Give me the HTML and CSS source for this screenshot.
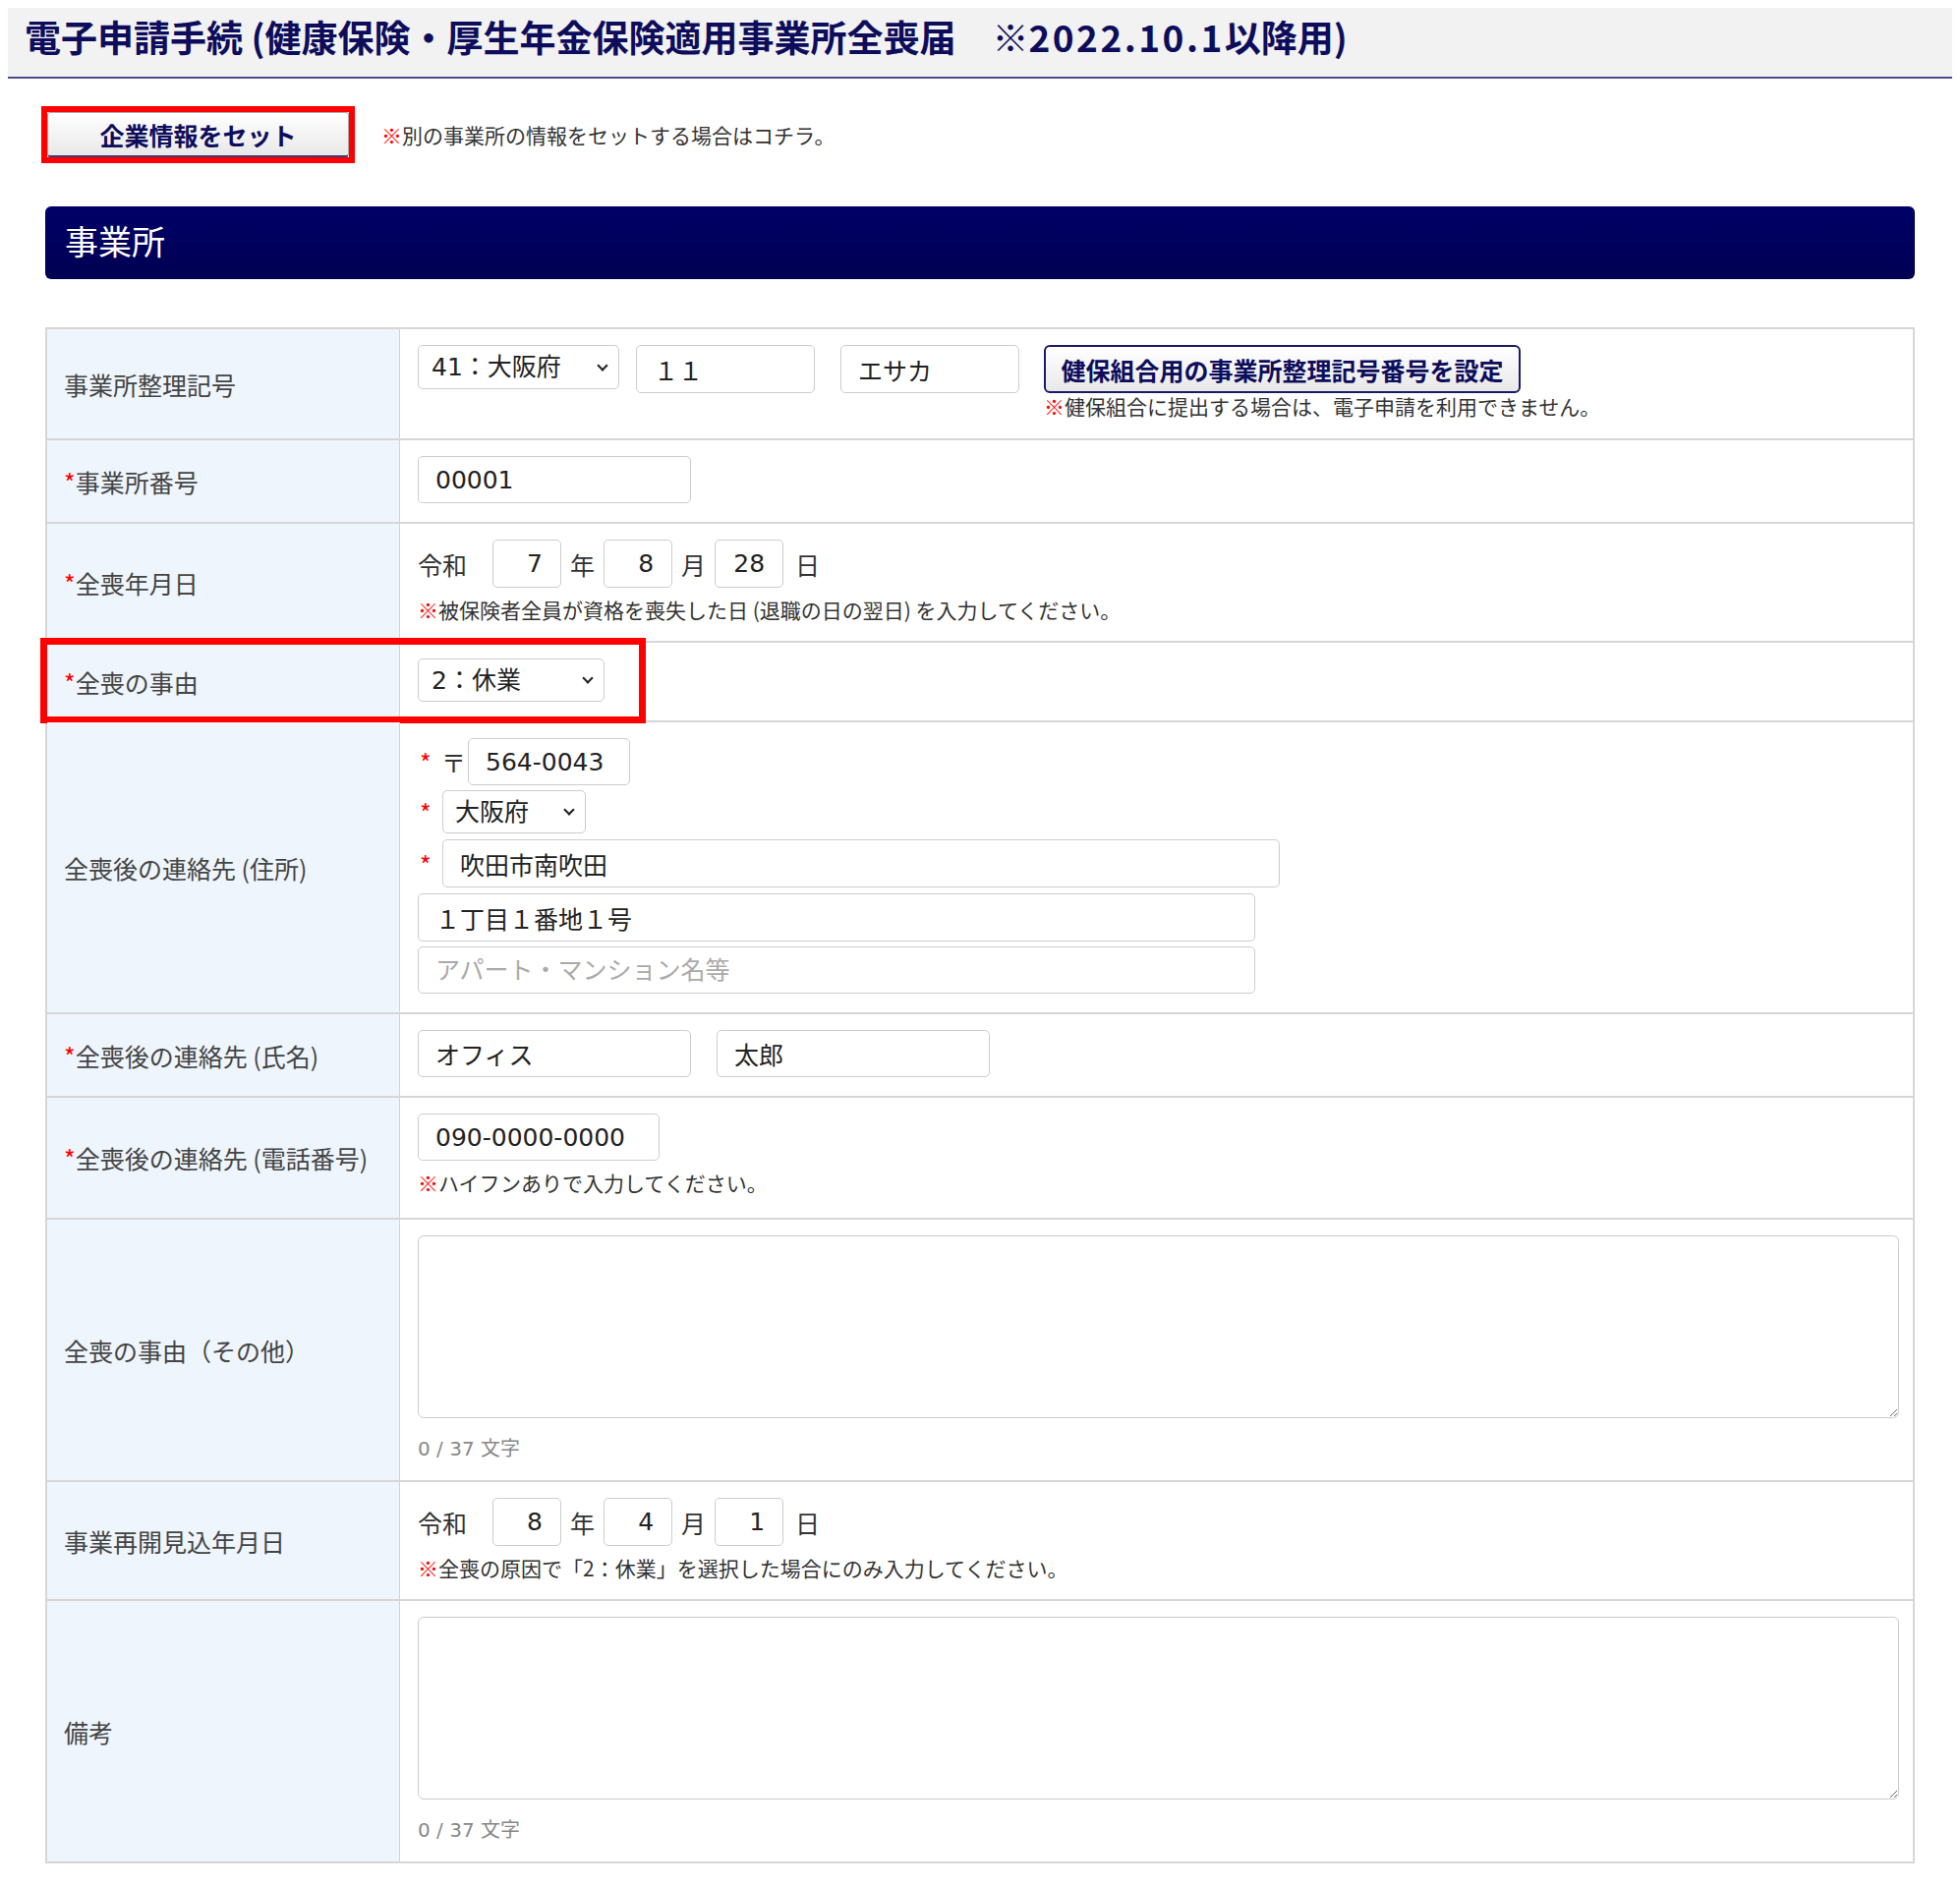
FILE: index.html
```html
<!doctype html>
<html lang="ja">
<head>
<meta charset="utf-8">
<title>電子申請手続 (健康保険・厚生年金保険適用事業所全喪届)</title>
<link rel="stylesheet" href="styles.css">
</head>
<body>

<h1 class="page-title">電子申請手続 (健康保険・厚生年金保険適用事業所全喪届　※<span class="date">2022.10.1</span>以降用)</h1>

<div class="main">

<div class="company-bar">
  <span class="mark-box"><button class="btn btn-set">企業情報をセット</button></span>
  <span class="note"><span class="kome">※</span>別の事業所の情報をセットする場合はコチラ。</span>
</div>

<h2 class="section">事業所</h2>

<div class="form">

  <div class="row">
    <div class="label">事業所整理記号</div>
    <div class="field">
      <div class="line top">
        <span class="sel"><select class="input select w-pref-code"><option>41：大阪府</option></select></span>
        <input class="input w-code gap-s" type="text" value="１１">
        <input class="input w-code gap-l" type="text" value="エサカ">
        <div class="btn-group">
          <button class="btn btn-kenpo">健保組合用の事業所整理記号番号を設定</button>
          <div class="note note-tight"><span class="kome">※</span>健保組合に提出する場合は、電子申請を利用できません。</div>
        </div>
      </div>
    </div>
  </div>

  <div class="row">
    <div class="label"><span class="req">*</span>事業所番号</div>
    <div class="field">
      <div class="line"><input class="input w-name" type="text" value="00001"></div>
    </div>
  </div>

  <div class="row">
    <div class="label"><span class="req">*</span>全喪年月日</div>
    <div class="field">
      <div class="line">
        <span class="era">令和</span>
        <input class="input num" type="text" value="7"><span class="unit">年</span>
        <input class="input num" type="text" value="8"><span class="unit">月</span>
        <input class="input num" type="text" value="28"><span class="unit">日</span>
      </div>
      <div class="note note-below"><span class="kome">※</span>被保険者全員が資格を喪失した日 (退職の日の翌日) を入力してください。</div>
    </div>
  </div>

  <div class="row">
    <div class="label"><span class="req">*</span>全喪の事由</div>
    <div class="field">
      <div class="line"><span class="sel"><select class="input select w-reason"><option>2：休業</option></select></span></div>
    </div>
    <span class="mark"></span>
  </div>

  <div class="row">
    <div class="label">全喪後の連絡先 (住所)</div>
    <div class="field">
      <div class="line"><span class="req-in">*</span><span class="zip">〒</span><input class="input w-zip" type="text" value="564-0043"></div>
      <div class="line gap-line"><span class="req-in wide">*</span><span class="sel"><select class="input select w-pref"><option>大阪府</option></select></span></div>
      <div class="line gap-line wide-gap"><span class="req-in wide">*</span><input class="input w-addr" type="text" value="吹田市南吹田"></div>
      <div class="line gap-line wide-gap"><input class="input w-addr" type="text" value="１丁目１番地１号"></div>
      <div class="line gap-line"><input class="input w-addr last" type="text" placeholder="アパート・マンション名等"></div>
    </div>
  </div>

  <div class="row">
    <div class="label"><span class="req">*</span>全喪後の連絡先 (氏名)</div>
    <div class="field">
      <div class="line">
        <input class="input w-name gap-l" type="text" value="オフィス">
        <input class="input w-name" type="text" value="太郎">
      </div>
    </div>
  </div>

  <div class="row">
    <div class="label"><span class="req">*</span>全喪後の連絡先 (電話番号)</div>
    <div class="field field-tel">
      <div class="line"><input class="input w-tel" type="text" value="090-0000-0000"></div>
      <div class="note note-below"><span class="kome">※</span>ハイフンありで入力してください。</div>
    </div>
  </div>

  <div class="row">
    <div class="label">全喪の事由（その他）</div>
    <div class="field">
      <textarea class="input area"></textarea>
      <div class="counter">0 / 37 文字</div>
    </div>
  </div>

  <div class="row">
    <div class="label">事業再開見込年月日</div>
    <div class="field">
      <div class="line">
        <span class="era">令和</span>
        <input class="input num" type="text" value="8"><span class="unit">年</span>
        <input class="input num" type="text" value="4"><span class="unit">月</span>
        <input class="input num" type="text" value="1"><span class="unit">日</span>
      </div>
      <div class="note note-below"><span class="kome">※</span>全喪の原因で「2：休業」を選択した場合にのみ入力してください。</div>
    </div>
  </div>

  <div class="row">
    <div class="label">備考</div>
    <div class="field">
      <textarea class="input area"></textarea>
      <div class="counter">0 / 37 文字</div>
    </div>
  </div>

</div>
</div>

</body>
</html>
```

FILE: styles.css
```css
body {
  margin: 8px;
  font-family: "Noto Sans CJK JP", "Noto Sans", sans-serif;
  color: #333;
  background: #fff;
}
.page-title {
  margin: 0;
  height: 70px;
  line-height: 58px;
  padding: 0 17px;
  background: #f2f2f2;
  border-bottom: 2px solid #4b4b8a;
  color: #0d0d5c;
  font-size: 37px;
  font-weight: bold;
  white-space: nowrap;
}
.page-title .date {
  letter-spacing: 2.5px;
}
.main {
  margin: 0 38px;
}

.company-bar {
  display: flex;
  align-items: center;
  margin-top: 28px;
}
.mark-box {
  display: inline-block;
  margin-left: -4px;
  border: 6px solid #ff0000;
}
.btn {
  font-family: inherit;
  font-weight: bold;
  color: #0d0d5c;
  background: linear-gradient(#ffffff, #e8e8e8);
  border: 1px solid #aaa;
  border-radius: 3px;
  padding: 0;
  cursor: pointer;
}
.btn-set {
  display: block;
  width: 307px;
  height: 46px;
  font-size: 25px;
  border-bottom: 2px solid #3a3a78;
}
.btn-kenpo {
  display: block;
  width: 485px;
  height: 49px;
  font-size: 25px;
  border: 2px solid #1a1a66;
  border-radius: 6px;
}
.note {
  font-size: 21px;
  line-height: 26px;
  color: #333;
}
.company-bar .note {
  margin-left: 27px;
}
.kome {
  color: #ff0000;
  font-weight: bold;
}

.section {
  margin: 44px 0 49px;
  height: 74px;
  line-height: 70px;
  padding-left: 20px;
  background: linear-gradient(#000068, #000052);
  color: #fff;
  font-size: 34px;
  font-weight: normal;
  border-radius: 6px;
}

.form {
  border: 2px solid #d6d6d6;
  border-bottom: none;
}
.row {
  display: grid;
  grid-template-columns: 359px 1fr;
  border-bottom: 2px solid #d6d6d6;
  position: relative;
}
.label {
  display: flex;
  align-items: center;
  padding: 0 17px;
  background: #eef5fc;
  border-right: 1px solid #cbd5df;
  font-size: 25px;
  color: #444;
}
.req {
  color: #ff0000;
}
.field {
  padding: 16px 14px 19px 18px;
}
.field-tel {
  padding-bottom: 23px;
}
.line {
  display: flex;
  align-items: center;
}
.line.top {
  align-items: flex-start;
}
.gap-line {
  margin-top: 5px;
}
.gap-line.wide-gap {
  margin-top: 6px;
}

.input {
  box-sizing: border-box;
  height: 48px;
  border: 1px solid #ccc;
  border-radius: 5px;
  padding: 0 17px;
  font-family: "DejaVu Sans", "Noto Sans CJK JP", sans-serif;
  font-size: 25px;
  color: #222;
  background: #fff;
  margin: 0;
  outline: none;
}
.input::placeholder {
  color: #aaa;
}
.sel {
  position: relative;
  display: inline-block;
}
.sel::after {
  content: "";
  position: absolute;
  right: 13px;
  top: 50%;
  width: 6px;
  height: 6px;
  margin-top: -6px;
  border-right: 2px solid #222;
  border-bottom: 2px solid #222;
  transform: rotate(45deg);
  pointer-events: none;
}
.select {
  display: block;
  appearance: none;
  -webkit-appearance: none;
  height: 45px;
  padding: 0 30px 0 13px;
}
.w-pref-code { width: 205px; }
.w-reason { width: 190px; height: 44px; }
.w-pref { width: 146px; height: 44px; padding-left: 12px; }
.w-code { width: 182px; height: 49px; }
.w-name { width: 278px; }
.w-tel { width: 246px; }
.w-zip { width: 165px; }
.w-addr { width: 852px; height: 49px; }
.w-addr.last { height: 48px; }
.gap-s { margin-left: 17px; }
.gap-l { margin-right: 26px; }
.w-code.gap-l { margin-left: 26px; margin-right: 25px; }

.note-tight {
  line-height: 27px;
}
.note-below {
  margin-top: 9px;
}

.era {
  font-size: 25px;
  margin-right: 26px;
}
.num {
  width: 70px;
  height: 49px;
  text-align: right;
  padding: 0 18px 0 8px;
}
.unit {
  font-size: 25px;
  margin: 0 9px;
}
.unit:last-child {
  margin-left: 12px;
}

.req-in {
  display: inline-block;
  width: 24px;
  color: #ff0000;
  font-size: 25px;
  padding-left: 2px;
  box-sizing: border-box;
}
.req-in.wide {
  width: 25px;
}
.zip {
  font-size: 25px;
  margin-right: 2px;
}

.area {
  display: block;
  width: 100%;
  height: 186px;
  border-radius: 6px;
  padding: 10px 14px;
  resize: vertical;
}
.counter {
  margin-top: 18px;
  font-family: "DejaVu Sans", "Noto Sans CJK JP", sans-serif;
  font-size: 20px;
  line-height: 26px;
  color: #888;
}

.mark {
  position: absolute;
  left: -7px;
  top: -5px;
  width: 616px;
  height: 87px;
  box-sizing: border-box;
  border: 7px solid #ff0000;
  pointer-events: none;
}
```
